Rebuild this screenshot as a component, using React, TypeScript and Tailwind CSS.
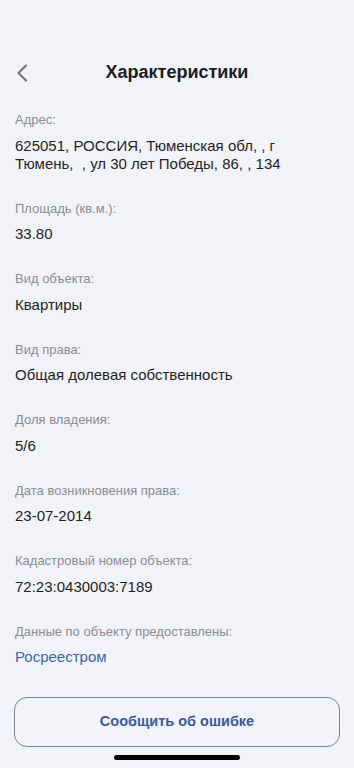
import React from 'react';

interface Field {
  label: string;
  value: string;
  link?: boolean;
}

const fields: Field[] = [
  { label: 'Адрес:', value: '625051, РОССИЯ, Тюменская обл, , г Тюмень,  , ул 30 лет Победы, 86, , 134' },
  { label: 'Площадь (кв.м.):', value: '33.80' },
  { label: 'Вид объекта:', value: 'Квартиры' },
  { label: 'Вид права:', value: 'Общая долевая собственность' },
  { label: 'Доля владения:', value: '5/6' },
  { label: 'Дата возникновения права:', value: '23-07-2014' },
  { label: 'Кадастровый номер объекта:', value: '72:23:0430003:7189' },
  { label: 'Данные по объекту предоставлены:', value: 'Росреестром', link: true },
];

const App: React.FC = () => {
  return (
    <div
      className="w-[354px] h-[768px] bg-[#f1f3f9] flex flex-col overflow-hidden"
      style={{ fontFamily: '"Liberation Sans", Arial, sans-serif' }}
    >
      {/* status bar (faded in the screenshot) */}
      <div className="h-[50px] shrink-0" />

      <div className="relative h-[44px] shrink-0 flex items-center justify-center">
        <button className="absolute left-[14px] top-[14px] w-[16px] h-[18px] flex items-center justify-center">
          <svg width="12" height="18" viewBox="0 0 12 18" fill="none">
            <path d="M10 1.5L2.5 9L10 16.5" stroke="#6e6e76" strokeWidth="2" strokeLinecap="round" strokeLinejoin="round" />
          </svg>
        </button>
        <h1 className="text-[18px] font-bold text-[#1c1c22]">Характеристики</h1>
      </div>

      <div className="flex flex-col pl-[15px] pr-[24px] pt-[18px]">
        {fields.map((f) => (
          <div key={f.label} className="flex flex-col mb-[28px]">
            <div className="text-[13px] leading-[16px] text-[#8b8c94]">{f.label}</div>
            <div
              className={`mt-[8.5px] text-[15px] leading-[18px] whitespace-pre-wrap ${
                f.link ? 'text-[#3d67a6]' : 'text-[#1f1f25]'
              }`}
            >
              {f.value}
            </div>
          </div>
        ))}
      </div>

      <div className="flex-1" />

      <div className="px-[14px]">
        <button className="w-full h-[50px] rounded-[13px] border border-[#7b8296] flex items-center justify-center text-[14.5px] font-bold text-[#3a5a98]">
          Сообщить об ошибке
        </button>
      </div>
      <div className="h-[21px] flex items-end justify-center pb-[8px]">
        <div className="w-[126px] h-[5px] rounded-full bg-black" />
      </div>
    </div>
  );
};

export default App;
